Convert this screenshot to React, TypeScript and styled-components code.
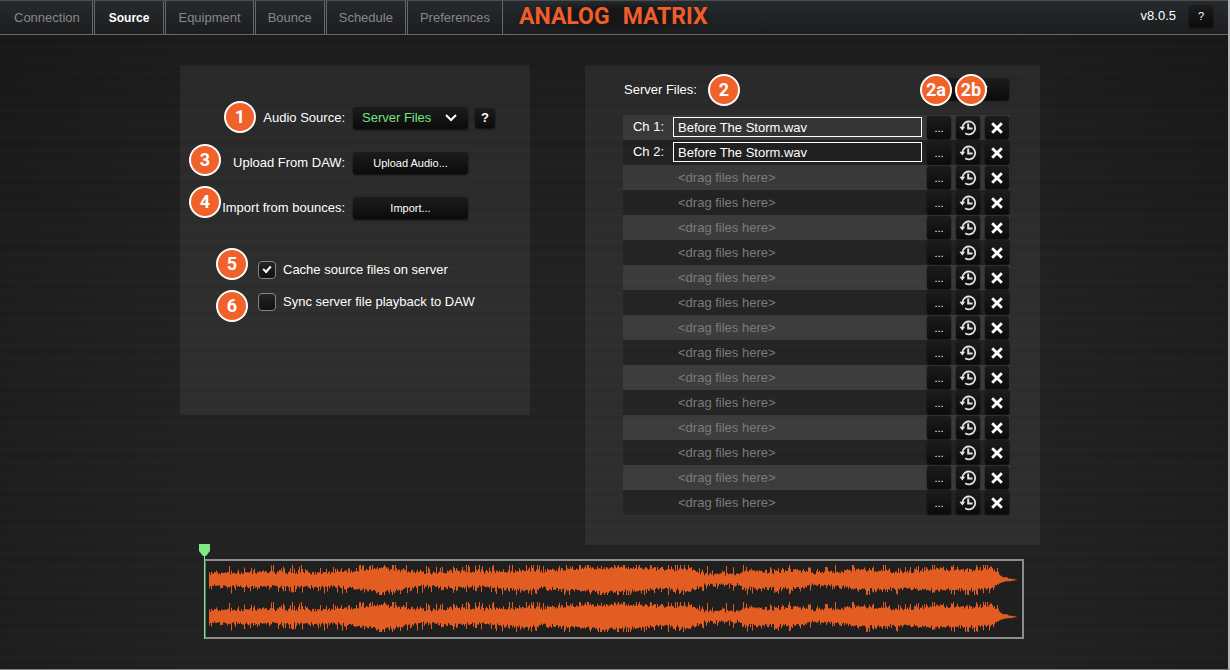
import React from "react";
import styled, { createGlobalStyle, css } from "styled-components";

const GlobalStyle = createGlobalStyle`
  *, *::before, *::after { box-sizing: border-box; }
  body {
    margin: 0;
    background: #1d1d1d;
    color: #fff;
    font-family: "Liberation Sans", Arial, Helvetica, sans-serif;
    font-size: 13px;
    line-height: 16px;
  }
  button, input, select { font: inherit; color: inherit; margin: 0; }
`;

const Page = styled.div`
  display: flex;
  flex-direction: column;
  min-height: 100vh;
  border-right: 2px solid #b8b8b8;
  border-bottom: 1px solid #808080;
  background:
    repeating-linear-gradient(180deg, rgba(0, 0, 0, 0.06) 0 1px, transparent 1px 6px, rgba(255, 255, 255, 0.006) 6px 9px, transparent 9px 13px),
    linear-gradient(90deg, rgba(0, 0, 0, 0.14), transparent 16%, transparent 84%, rgba(0, 0, 0, 0.14)),
    linear-gradient(180deg, #1b1b1b, #222 45%, #222);
`;

const TopBar = styled.header`
  display: flex;
  align-items: stretch;
  height: 35px;
  border-top: 1px solid #4b4d4f;
  border-bottom: 1px solid #66686a;
  background: linear-gradient(180deg, #272a2d, #1b1d1f);
`;

const Tabs = styled.nav`
  display: flex;
  gap: 1px;
`;

const Tab = styled.a<{ $active?: boolean }>`
  display: flex;
  align-items: center;
  padding: 0 ${(p) => (p.$active ? 14 : 12)}px;
  border: solid #66686a;
  border-width: 0 1px;
  color: ${(p) => (p.$active ? "#fff" : "#85878a")};
  font-size: ${(p) => (p.$active ? 12 : 13)}px;
  font-weight: ${(p) => (p.$active ? 700 : 400)};
  text-decoration: none;
  &:first-child {
    padding-left: 14px;
    border-left: 0;
  }
`;

const Logo = styled.h1`
  display: flex;
  align-items: center;
  gap: 13px;
  margin: 0;
  padding: 0 14px 2px 16px;
  background: radial-gradient(closest-side, #161616 50%, transparent);
  color: #ef5e2a;
  font: 700 23px/28px Roboto, "Liberation Sans", sans-serif;
`;

const Version = styled.div`
  display: flex;
  align-items: center;
  gap: 13px;
  margin-left: auto;
  padding: 0 15px 4px 0;
`;

const buttonFace = css`
  border: 0;
  border-radius: 3px;
  background: linear-gradient(180deg, #1c1c1c, #0b0b0b);
  box-shadow: 0 1px 2px rgba(0, 0, 0, 0.7);
`;

const Button = styled.button`
  ${buttonFace}
  width: 115px;
  height: 22px;
  padding: 0;
  font-size: 11px;
`;

const HelpButton = styled.button<{ $strong?: boolean }>`
  ${buttonFace}
  width: ${(p) => (p.$strong ? 20 : 24)}px;
  height: ${(p) => (p.$strong ? 20 : 22)}px;
  padding: 0;
  font-size: ${(p) => (p.$strong ? 13 : 11)}px;
  font-weight: ${(p) => (p.$strong ? 700 : 400)};
`;

const Main = styled.main`
  display: flex;
  flex-direction: column;
  align-items: center;
  padding: 30px 16px;
`;

const Panels = styled.div`
  display: grid;
  grid-template-columns: 350fr 455fr;
  align-items: start;
  gap: 55px;
  width: 100%;
  max-width: 868px;
  padding-right: 8px;
`;

const Panel = styled.section`
  background: rgba(255, 255, 255, 0.055);
`;

const SourcePanel = styled(Panel)`
  min-height: 350px;
  padding-top: 30px;
`;

const FilesPanel = styled(Panel)`
  padding: 0 30px 30px 38px;
`;

const Field = styled.div`
  position: relative;
  display: grid;
  grid-template-columns: 166px 115px 20px;
  align-items: center;
  column-gap: 7px;
  height: 45px;
`;

const FieldLabel = styled.label`
  padding-right: 1px;
  text-align: right;
`;

const SelectBox = styled.div`
  position: relative;
  height: 22px;
  svg {
    position: absolute;
    top: 7px;
    right: 11px;
    pointer-events: none;
  }
`;

const Select = styled.select`
  ${buttonFace}
  appearance: none;
  width: 100%;
  height: 22px;
  padding: 0 24px 0 9px;
  color: #74e37f;
`;

const Options = styled.div`
  padding: 24px 0 0 78px;
`;

const Option = styled.label`
  position: relative;
  display: flex;
  align-items: center;
  gap: 7px;
  height: 32px;
`;

const Tick = styled.input`
  appearance: none;
  display: grid;
  place-items: center;
  flex: none;
  width: 18px;
  height: 18px;
  margin: 0;
  border: 1px solid #858585;
  border-radius: 4px;
  background: linear-gradient(180deg, #242424, #101010);
  &:checked::after {
    content: "";
    width: 8px;
    height: 5px;
    margin-bottom: 3px;
    border: solid #fff;
    border-width: 0 0 2px 2px;
    transform: rotate(-48deg);
  }
`;

const Badge = styled.span<{ $x: number; $y: number }>`
  position: absolute;
  left: ${(p) => p.$x}px;
  top: ${(p) => p.$y}px;
  display: flex;
  align-items: center;
  justify-content: center;
  width: 32px;
  height: 32px;
  border: 2px solid #fff;
  border-radius: 50%;
  background: #f1622b;
  color: #fff;
  font: 700 18px/20px Roboto, "Liberation Sans", sans-serif;
`;

const FilesHeader = styled.div`
  position: relative;
  display: flex;
  align-items: center;
  justify-content: space-between;
  height: 50px;
  padding: 0 1px;
`;

const FilesTitle = styled.h2`
  margin: 0;
  font-size: 13px;
  font-weight: 400;
`;

const MenuButton = styled.button`
  ${buttonFace}
  display: flex;
  align-items: center;
  justify-content: flex-end;
  width: 74px;
  height: 22px;
  margin-bottom: 2px;
  padding: 0 21px;
`;

const EndBadges = styled.div`
  position: absolute;
  top: 0;
  right: 0;
  width: 90px;
`;

const Channels = styled.ul`
  margin: 0;
  padding: 0;
  list-style: none;
`;

const Channel = styled.li`
  display: grid;
  grid-template-columns: 41px 1fr 24px 24px 24px;
  align-items: center;
  height: 25px;
  padding-right: 1px;
  column-gap: 5px;
  &:nth-child(odd) { background: rgba(255, 255, 255, 0.07); }
  &:nth-child(even) { background: rgba(0, 0, 0, 0.2); }
`;

const ChannelLabel = styled.label`
  align-self: start;
  margin-top: 2px;
  line-height: 20px;
  text-align: right;
`;

const FileInput = styled.input<{ $loaded: boolean }>`
  align-self: start;
  width: calc(100% - 4px);
  min-width: 0;
  height: 20px;
  margin: 2px 0 0 4px;
  padding: 0 4px;
  border: 1px solid ${(p) => (p.$loaded ? "#fff" : "transparent")};
  background: ${(p) => (p.$loaded ? "rgba(0, 0, 0, 0.06)" : "transparent")};
  text-overflow: ellipsis;
  &::placeholder { color: #7b7b7b; opacity: 1; }
`;

const RowButton = styled.button`
  ${buttonFace}
  display: flex;
  align-items: center;
  justify-content: center;
  width: 24px;
  height: 23px;
  padding: 0;
  border-radius: 2px;
  font-size: 11px;
`;

const Waveform = styled.section`
  position: relative;
  width: 100%;
  max-width: 820px;
  height: 80px;
  margin-top: 14px;
  border: 2px solid #8c8c8c;
  border-left-color: #5f7361;
  background: #1f1f1f;
`;

const Wave = styled.svg`
  display: block;
  width: 100%;
  height: 76px;
`;

const Playhead = styled.svg`
  position: absolute;
  left: -7px;
  top: -17px;
`;

/* Loudness outline: x, height above the centre line, height below it. */
const outline: [number, number, number][] = [
  [3, 7, 6], [54, 8, 7], [94, 7, 7], [134, 8, 7], [154, 10, 10], [174, 12, 12],
  [194, 10, 10], [212, 8, 7], [222, 7, 6], [244, 9, 8], [274, 8, 7], [309, 9, 10],
  [339, 9, 8], [354, 11, 10], [394, 12, 12], [414, 13, 12], [439, 12, 10],
  [459, 10, 9], [484, 12, 11], [492, 8, 7], [498, 6, 5], [533, 6, 5],
  [539, 10, 9], [564, 7, 7], [589, 10, 9], [604, 7, 5], [629, 8, 6],
  [654, 11, 10], [694, 8, 9], [729, 11, 10], [764, 10, 10], [786, 12, 9],
  [792, 6, 4], [796, 3, 2], [811, 0, 0],
];

const wavePath = (centre: number) => {
  let seed = 4211;
  const random = () => {
    seed = (seed * 16807) % 2147483647;
    return seed / 2147483647;
  };
  const top: string[] = [];
  const bottom: string[] = [];
  for (let x = 3; x <= 811; x += 1) {
    let i = 0;
    while (i < outline.length - 2 && outline[i + 1][0] < x) i += 1;
    const [x0, u0, d0] = outline[i];
    const [x1, u1, d1] = outline[i + 1];
    const t = (x - x0) / (x1 - x0);
    const spikeUp = Math.pow(random(), 5) * 8 + random() * 3 - 2;
    const spikeDown = Math.pow(random(), 5) * 7 + random() * 3 - 2;
    const calm = x > 792 ? 0.1 : 1;
    const up = Math.min(15, Math.max(0, u0 + (u1 - u0) * t + spikeUp * calm));
    const down = Math.min(15, Math.max(0, d0 + (d1 - d0) * t + spikeDown * calm));
    top.push(`${x},${(centre - up).toFixed(1)} ${x + 1},${(centre - up).toFixed(1)}`);
    bottom.unshift(`${x + 1},${(centre + down).toFixed(1)} ${x},${(centre + down).toFixed(1)}`);
  }
  return `M${top.join(" L")} L${bottom.join(" L")}Z`;
};

const HistoryIcon = () => (
  <svg width="18" height="18" viewBox="0 0 18 18" fill="none" stroke="#e2e2e2" strokeWidth="1.8" aria-hidden="true">
    <path d="M3.4 8.4A6.4 6.4 0 1 1 6.2 14.2" />
    <path d="M9.2 4.6v5h4.4" strokeWidth="2" />
    <path d="M0.4 7.8h5.8L3.4 11.4z" fill="#e2e2e2" stroke="none" />
  </svg>
);

const CrossIcon = () => (
  <svg width="12" height="12" viewBox="0 0 12 12" fill="none" stroke="#fff" strokeWidth="2.8" aria-hidden="true">
    <path d="M1.2 1.2l9.6 9.6M10.8 1.2L1.2 10.8" />
  </svg>
);

const Chevron = () => (
  <svg width="12" height="8" viewBox="0 0 12 8" fill="none" stroke="#fff" strokeWidth="2" aria-hidden="true">
    <path d="M1 1l5 5 5-5" />
  </svg>
);

const tabs = ["Connection", "Source", "Equipment", "Bounce", "Schedule", "Preferences"];
const loadedFiles = ["Before The Storm.wav", "Before The Storm.wav"];
const channels = Array.from({ length: 16 }, (_, i) => loadedFiles[i] ?? "");

export default function App() {
  return (
    <Page>
      <GlobalStyle />
      <TopBar>
        <Tabs>
          {tabs.map((name) => (
            <Tab key={name} href={`#${name.toLowerCase()}`} $active={name === "Source"}>
              {name}
            </Tab>
          ))}
        </Tabs>
        <Logo>
          <span>ANALOG</span>
          <span>MATRIX</span>
        </Logo>
        <Version>
          <span>v8.0.5</span>
          <HelpButton type="button">?</HelpButton>
        </Version>
      </TopBar>

      <Main>
        <Panels>
          <SourcePanel>
            <Field>
              <FieldLabel htmlFor="audio-source">Audio Source:</FieldLabel>
              <SelectBox>
                <Select id="audio-source" defaultValue="server">
                  <option value="server">Server Files</option>
                </Select>
                <Chevron />
              </SelectBox>
              <HelpButton type="button" $strong>?</HelpButton>
              <Badge $x={44} $y={6}>1</Badge>
            </Field>
            <Field>
              <FieldLabel htmlFor="upload">Upload From DAW:</FieldLabel>
              <Button id="upload" type="button">Upload Audio...</Button>
              <Badge $x={9} $y={4}>3</Badge>
            </Field>
            <Field>
              <FieldLabel htmlFor="import">Import from bounces:</FieldLabel>
              <Button id="import" type="button">Import...</Button>
              <Badge $x={9} $y={1}>4</Badge>
            </Field>
            <Options>
              <Option>
                <Tick type="checkbox" defaultChecked />
                Cache source files on server
                <Badge $x={-42} $y={-6}>5</Badge>
              </Option>
              <Option>
                <Tick type="checkbox" />
                Sync server file playback to DAW
                <Badge $x={-42} $y={4}>6</Badge>
              </Option>
            </Options>
          </SourcePanel>

          <FilesPanel>
            <FilesHeader>
              <FilesTitle>Server Files:</FilesTitle>
              <MenuButton type="button" aria-label="File options">
                <Chevron />
              </MenuButton>
              <Badge $x={85} $y={9}>2</Badge>
              <EndBadges>
                <Badge $x={0} $y={9}>2a</Badge>
                <Badge $x={35} $y={9}>2b</Badge>
              </EndBadges>
            </FilesHeader>
            <Channels>
              {channels.map((file, i) => (
                <Channel key={i}>
                  <ChannelLabel htmlFor={`channel-${i + 1}`}>{file && `Ch ${i + 1}:`}</ChannelLabel>
                  <FileInput
                    id={`channel-${i + 1}`}
                    $loaded={file !== ""}
                    defaultValue={file}
                    placeholder="<drag files here>"
                  />
                  <RowButton type="button">...</RowButton>
                  <RowButton type="button" aria-label="Recent files"><HistoryIcon /></RowButton>
                  <RowButton type="button" aria-label="Remove file"><CrossIcon /></RowButton>
                </Channel>
              ))}
            </Channels>
          </FilesPanel>
        </Panels>

        <Waveform aria-label="Waveform">
          <Wave viewBox="0 0 816 76" preserveAspectRatio="none" fill="#e35c22">
            <path d={wavePath(19)} />
            <path d={wavePath(56)} />
          </Wave>
          <Playhead width="11" height="95" viewBox="0 0 11 95" fill="#7fe886">
            <path d="M0 0h11v7L7 12H4L0 7z" />
            <path d="M5 11h1v84H5z" />
          </Playhead>
        </Waveform>
      </Main>
    </Page>
  );
}
